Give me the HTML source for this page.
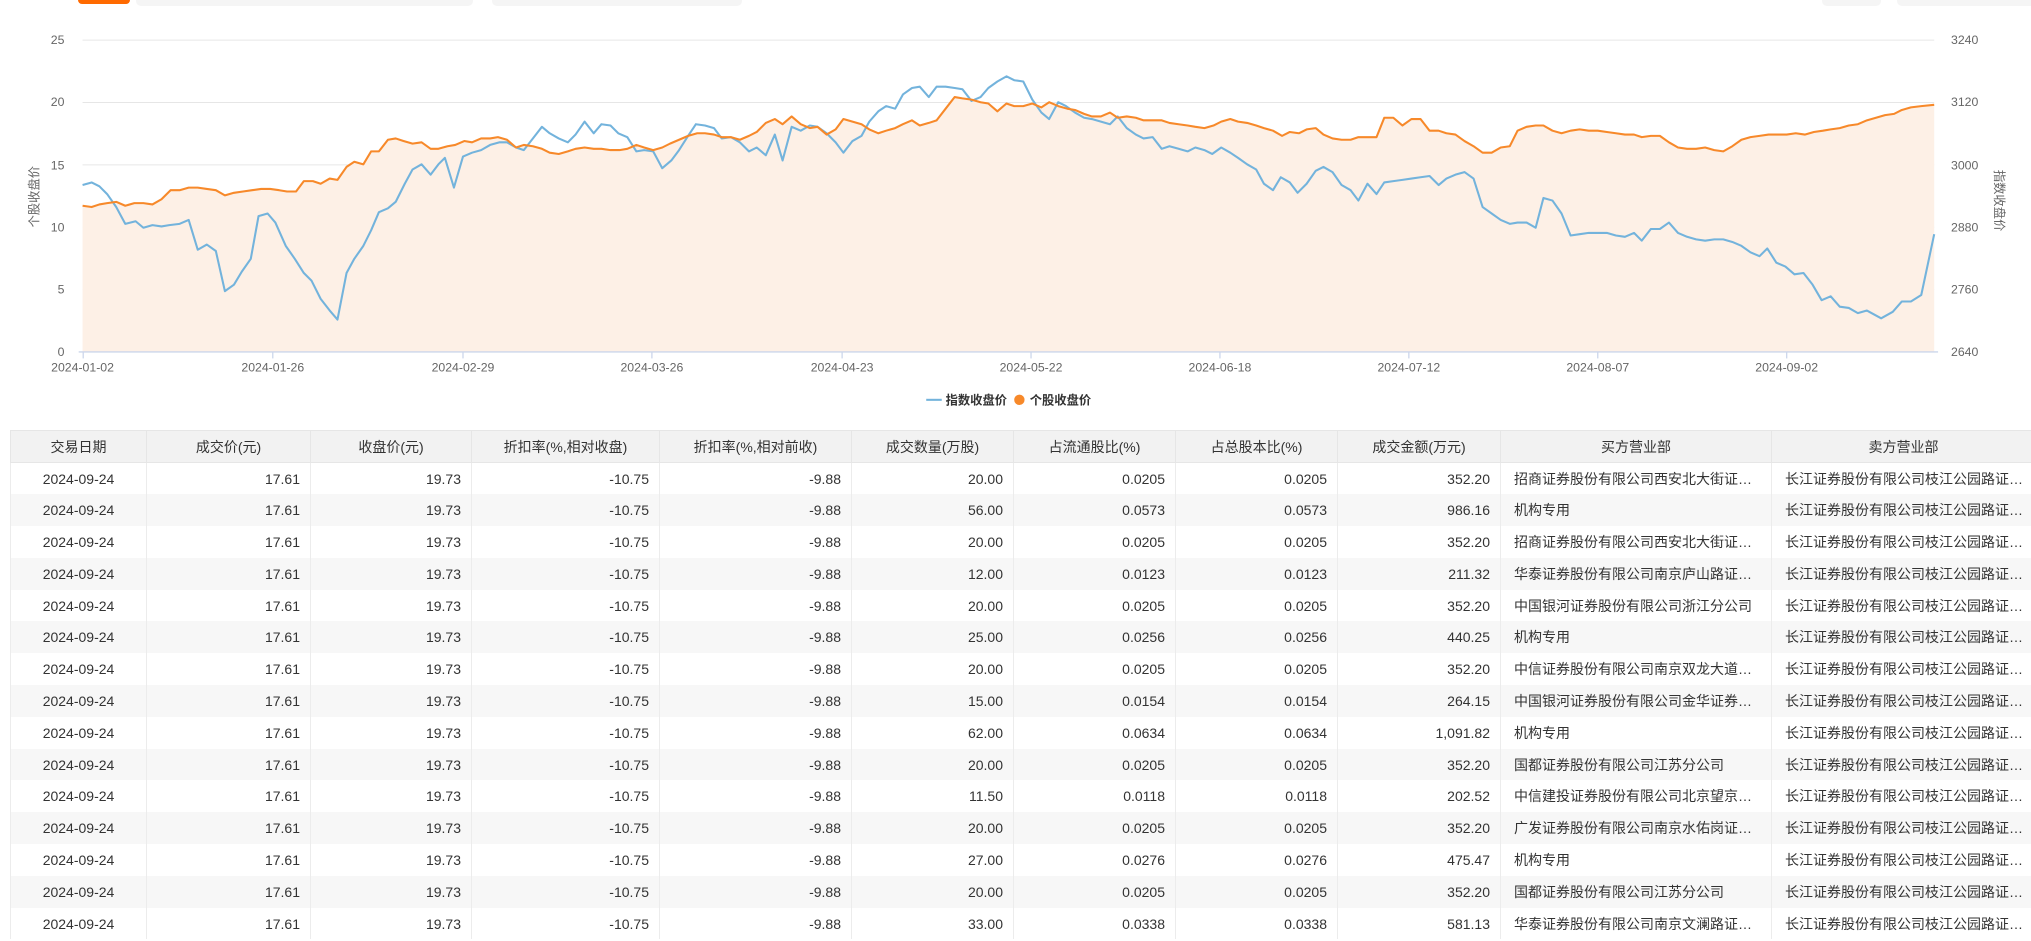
<!DOCTYPE html>
<html><head><meta charset="utf-8">
<style>
*{margin:0;padding:0;box-sizing:border-box}
html,body{width:2031px;height:941px;overflow:hidden;background:#fff;font-family:"Liberation Sans","Noto Sans CJK SC",sans-serif;color:#333}
.tab{position:absolute;top:0;height:6px;background:#f5f5f5;border-radius:0 0 5px 5px}
svg text{font-family:"Liberation Sans","Noto Sans CJK SC",sans-serif}
table{position:absolute;left:10px;top:430px;border-collapse:collapse;table-layout:fixed;width:2025px;font-size:14px}
th{background:#f2f2f2;font-weight:normal;height:32px;border:1px solid #e6e6e6;text-align:center;color:#333;white-space:nowrap}
td{height:31.8px;border-left:1px solid #ececec;border-right:1px solid #ececec;padding:0 10px;white-space:nowrap;overflow:hidden;text-overflow:ellipsis;text-align:right}
td.c{text-align:center}
td.l{text-align:left;padding-left:13px}
tr:nth-child(odd) td{background:#f7f7f7}
</style></head><body>
<div class="tab" style="left:78px;width:52px;height:4px;background:#ff6a00;border-radius:0 0 4px 4px;z-index:2"></div>
<div class="tab" style="left:136px;width:337px"></div>
<div class="tab" style="left:492px;width:250px"></div>
<div class="tab" style="left:1822px;width:59px"></div>
<div class="tab" style="left:1897px;width:140px"></div>

<svg width="2031" height="427" viewBox="0 0 1568 330" style="position:absolute;left:0;top:0">
<g stroke="#e6e6e6" stroke-width="0.8">
<line x1="63" x2="1494" y1="31" y2="31"/><line x1="63" x2="1494" y1="79.2" y2="79.2"/><line x1="63" x2="1494" y1="127.4" y2="127.4"/><line x1="63" x2="1494" y1="175.6" y2="175.6"/><line x1="63" x2="1494" y1="223.8" y2="223.8"/>
</g>
<polygon fill="#fdf0e6" points="63,159 70,160 76,158 82,157 89,156 96,159 103,157 110,157 117,158 124,154 131,147 138,147 145,145 152,145 159,146 166,147 173,151 180,149 187,148 194,147 201,146 208,146 215,147 221,148 228,148 234,140 241,140 247,142 254,138 260,139 267,129 273,125 280,127 286,117 292,117 299,108 305,107 311,109 318,111 325,110 332,115 338,115 345,113 351,112 358,109 364,110 371,107 378,107 384,106 391,108 398,114 404,112 411,113 418,115 424,118 431,119 438,117 444,115 451,114 458,115 464,115 471,116 478,116 484,115 491,112 497,114 504,116 511,114 517,111 524,108 531,105 538,103 544,103 551,104 557,106 564,106 571,108 578,105 584,102 591,95 598,92 604,96 611,90 618,96 625,99 631,98 638,104 645,100 651,92 658,94 665,96 671,100 678,103 684,101 691,99 697,96 704,93 710,97 717,95 723,93 730,84 737,75 743,76 750,77 757,79 763,80 770,86 777,80 783,82 790,82 797,80 804,83 810,79 817,82 824,84 830,85 837,88 843,90 850,90 857,87 863,91 870,90 877,91 883,93 890,93 897,93 903,95 910,96 917,97 923,98 930,99 937,97 943,94 950,92 956,94 963,95 970,97 976,99 983,101 990,105 996,102 1003,103 1009,100 1016,99 1022,104 1029,107 1036,108 1043,108 1049,106 1056,106 1063,106 1069,91 1076,91 1083,97 1090,92 1097,92 1104,101 1111,101 1117,103 1124,104 1131,109 1138,113 1145,118 1152,118 1159,114 1166,113 1172,101 1179,98 1186,97 1192,97 1199,101 1206,103 1213,101 1220,100 1227,101 1234,101 1241,102 1248,103 1255,104 1262,104 1268,106 1275,105 1282,105 1289,110 1296,114 1303,115 1310,115 1317,114 1324,116 1331,117 1338,113 1345,108 1352,106 1359,105 1366,104 1373,104 1380,104 1387,103 1394,104 1401,102 1408,101 1414,100 1421,99 1428,97 1435,96 1442,93 1449,91 1456,89 1463,88 1469,85 1476,83 1484,82 1494,81 1494,272 63,272"/>
<polyline fill="none" stroke="#73b3dc" stroke-width="1.6" stroke-linejoin="round" points="63,143 70,141 76,144 82,150 89,160 96,173 104,171 110,176 117,174 124,175 130,174 138,173 145,170 152,193 159,189 166,194 173,225 180,220 186,210 193,200 199,167 206,165 212,172 220,190 227,200 234,211 240,217 247,231 254,240 260,247 267,211 273,200 280,190 286,178 292,164 299,161 305,156 312,142 318,131 325,127 332,135 338,127 343,122 350,145 357,121 364,118 371,116 378,112 385,110 391,110 398,114 404,116 411,107 418,98 424,103 431,107 438,110 444,104 451,94 458,103 464,96 471,97 477,103 484,106 491,117 497,116 504,117 511,130 518,124 524,116 531,105 537,96 544,97 551,99 557,107 564,106 571,110 578,117 584,114 591,120 598,104 604,124 611,98 618,101 625,97 631,98 638,103 645,110 651,118 658,109 665,105 671,94 678,86 684,82 691,84 697,73 704,68 710,67 717,75 723,67 730,67 737,68 743,69 750,78 757,75 763,68 770,63 777,59 783,62 790,63 797,77 804,87 810,92 817,79 823,82 830,87 837,91 843,92 850,94 857,96 863,90 870,99 877,104 883,107 890,106 897,115 903,113 910,115 917,117 923,114 930,116 936,119 943,114 950,118 956,122 963,127 970,131 976,142 983,147 989,137 996,141 1002,149 1009,142 1016,132 1022,129 1029,133 1036,143 1043,147 1049,155 1056,142 1063,150 1069,141 1076,140 1083,139 1090,138 1097,137 1104,136 1111,143 1117,138 1124,135 1131,133 1138,138 1145,160 1152,165 1159,170 1166,173 1172,172 1179,172 1186,176 1192,153 1199,155 1206,165 1213,182 1220,181 1227,180 1234,180 1241,180 1248,182 1255,183 1262,180 1268,186 1275,177 1282,177 1289,172 1296,180 1303,183 1310,185 1317,186 1324,185 1331,185 1338,187 1345,190 1352,195 1359,198 1365,192 1372,203 1379,206 1386,212 1393,211 1400,220 1407,232 1414,229 1421,237 1428,238 1435,242 1442,240 1453,246 1462,241 1469,233 1476,233 1484,228 1494,181"/>
<polyline fill="none" stroke="#f7892a" stroke-width="1.6" stroke-linejoin="round" points="63,159 70,160 76,158 82,157 89,156 96,159 103,157 110,157 117,158 124,154 131,147 138,147 145,145 152,145 159,146 166,147 173,151 180,149 187,148 194,147 201,146 208,146 215,147 221,148 228,148 234,140 241,140 247,142 254,138 260,139 267,129 273,125 280,127 286,117 292,117 299,108 305,107 311,109 318,111 325,110 332,115 338,115 345,113 351,112 358,109 364,110 371,107 378,107 384,106 391,108 398,114 404,112 411,113 418,115 424,118 431,119 438,117 444,115 451,114 458,115 464,115 471,116 478,116 484,115 491,112 497,114 504,116 511,114 517,111 524,108 531,105 538,103 544,103 551,104 557,106 564,106 571,108 578,105 584,102 591,95 598,92 604,96 611,90 618,96 625,99 631,98 638,104 645,100 651,92 658,94 665,96 671,100 678,103 684,101 691,99 697,96 704,93 710,97 717,95 723,93 730,84 737,75 743,76 750,77 757,79 763,80 770,86 777,80 783,82 790,82 797,80 804,83 810,79 817,82 824,84 830,85 837,88 843,90 850,90 857,87 863,91 870,90 877,91 883,93 890,93 897,93 903,95 910,96 917,97 923,98 930,99 937,97 943,94 950,92 956,94 963,95 970,97 976,99 983,101 990,105 996,102 1003,103 1009,100 1016,99 1022,104 1029,107 1036,108 1043,108 1049,106 1056,106 1063,106 1069,91 1076,91 1083,97 1090,92 1097,92 1104,101 1111,101 1117,103 1124,104 1131,109 1138,113 1145,118 1152,118 1159,114 1166,113 1172,101 1179,98 1186,97 1192,97 1199,101 1206,103 1213,101 1220,100 1227,101 1234,101 1241,102 1248,103 1255,104 1262,104 1268,106 1275,105 1282,105 1289,110 1296,114 1303,115 1310,115 1317,114 1324,116 1331,117 1338,113 1345,108 1352,106 1359,105 1366,104 1373,104 1380,104 1387,103 1394,104 1401,102 1408,101 1414,100 1421,99 1428,97 1435,96 1442,93 1449,91 1456,89 1463,88 1469,85 1476,83 1484,82 1494,81"/>
<line x1="60" x2="1497" y1="272" y2="272" stroke="#ccd6eb" stroke-width="1"/>
<g stroke="#ccd6eb"><line x1="63.5" x2="63.5" y1="272" y2="277"/><line x1="210" x2="210" y1="272" y2="277"/><line x1="357" x2="357" y1="272" y2="277"/><line x1="503" x2="503" y1="272" y2="277"/><line x1="650" x2="650" y1="272" y2="277"/><line x1="796" x2="796" y1="272" y2="277"/><line x1="942" x2="942" y1="272" y2="277"/><line x1="1088" x2="1088" y1="272" y2="277"/><line x1="1234" x2="1234" y1="272" y2="277"/><line x1="1380" x2="1380" y1="272" y2="277"/></g>
<g font-size="9.5" fill="#666" text-anchor="end">
<text x="49" y="34">25</text><text x="49" y="82">20</text><text x="49" y="131">15</text><text x="49" y="179">10</text><text x="49" y="227">5</text><text x="49" y="275">0</text>
</g>
<g font-size="9.5" fill="#666">
<text x="1507" y="34">3240</text><text x="1507" y="82">3120</text><text x="1507" y="131">3000</text><text x="1507" y="179">2880</text><text x="1507" y="227">2760</text><text x="1507" y="275">2640</text>
</g>
<g font-size="9.5" fill="#666" text-anchor="middle">
<text x="63" y="287">2024-01-02</text><text x="210" y="287">2024-01-26</text><text x="357" y="287">2024-02-29</text><text x="503" y="287">2024-03-26</text><text x="650" y="287">2024-04-23</text><text x="796" y="287">2024-05-22</text><text x="942" y="287">2024-06-18</text><text x="1088" y="287">2024-07-12</text><text x="1234" y="287">2024-08-07</text><text x="1380" y="287">2024-09-02</text>
</g>
<text font-size="9.5" fill="#666" text-anchor="middle" transform="translate(29,152) rotate(-90)">个股收盘价</text>
<text font-size="9.5" fill="#666" text-anchor="middle" transform="translate(1541,155) rotate(90)">指数收盘价</text>
<line x1="715" x2="727" y1="309" y2="309" stroke="#73b3dc" stroke-width="1.6"/>
<text x="730" y="312.5" font-size="9.5" font-weight="bold" fill="#333">指数收盘价</text>
<circle cx="787" cy="309" r="4" fill="#f7892a"/>
<text x="795" y="312.5" font-size="9.5" font-weight="bold" fill="#333">个股收盘价</text>
</svg>

<table>
<colgroup><col style="width:136px"><col style="width:164px"><col style="width:161px"><col style="width:188px"><col style="width:192px"><col style="width:162px"><col style="width:162px"><col style="width:162px"><col style="width:163px"><col style="width:271px"><col style="width:264px"></colgroup>
<tr><th>交易日期</th><th>成交价(元)</th><th>收盘价(元)</th><th>折扣率(%,相对收盘)</th><th>折扣率(%,相对前收)</th><th>成交数量(万股)</th><th>占流通股比(%)</th><th>占总股本比(%)</th><th>成交金额(万元)</th><th>买方营业部</th><th>卖方营业部</th></tr>
<tr><td class="c">2024-09-24</td><td>17.61</td><td>19.73</td><td>-10.75</td><td>-9.88</td><td>20.00</td><td>0.0205</td><td>0.0205</td><td>352.20</td><td class="l">招商证券股份有限公司西安北大街证…</td><td class="l">长江证券股份有限公司枝江公园路证…</td></tr>
<tr><td class="c">2024-09-24</td><td>17.61</td><td>19.73</td><td>-10.75</td><td>-9.88</td><td>56.00</td><td>0.0573</td><td>0.0573</td><td>986.16</td><td class="l">机构专用</td><td class="l">长江证券股份有限公司枝江公园路证…</td></tr>
<tr><td class="c">2024-09-24</td><td>17.61</td><td>19.73</td><td>-10.75</td><td>-9.88</td><td>20.00</td><td>0.0205</td><td>0.0205</td><td>352.20</td><td class="l">招商证券股份有限公司西安北大街证…</td><td class="l">长江证券股份有限公司枝江公园路证…</td></tr>
<tr><td class="c">2024-09-24</td><td>17.61</td><td>19.73</td><td>-10.75</td><td>-9.88</td><td>12.00</td><td>0.0123</td><td>0.0123</td><td>211.32</td><td class="l">华泰证券股份有限公司南京庐山路证…</td><td class="l">长江证券股份有限公司枝江公园路证…</td></tr>
<tr><td class="c">2024-09-24</td><td>17.61</td><td>19.73</td><td>-10.75</td><td>-9.88</td><td>20.00</td><td>0.0205</td><td>0.0205</td><td>352.20</td><td class="l">中国银河证券股份有限公司浙江分公司</td><td class="l">长江证券股份有限公司枝江公园路证…</td></tr>
<tr><td class="c">2024-09-24</td><td>17.61</td><td>19.73</td><td>-10.75</td><td>-9.88</td><td>25.00</td><td>0.0256</td><td>0.0256</td><td>440.25</td><td class="l">机构专用</td><td class="l">长江证券股份有限公司枝江公园路证…</td></tr>
<tr><td class="c">2024-09-24</td><td>17.61</td><td>19.73</td><td>-10.75</td><td>-9.88</td><td>20.00</td><td>0.0205</td><td>0.0205</td><td>352.20</td><td class="l">中信证券股份有限公司南京双龙大道…</td><td class="l">长江证券股份有限公司枝江公园路证…</td></tr>
<tr><td class="c">2024-09-24</td><td>17.61</td><td>19.73</td><td>-10.75</td><td>-9.88</td><td>15.00</td><td>0.0154</td><td>0.0154</td><td>264.15</td><td class="l">中国银河证券股份有限公司金华证券…</td><td class="l">长江证券股份有限公司枝江公园路证…</td></tr>
<tr><td class="c">2024-09-24</td><td>17.61</td><td>19.73</td><td>-10.75</td><td>-9.88</td><td>62.00</td><td>0.0634</td><td>0.0634</td><td>1,091.82</td><td class="l">机构专用</td><td class="l">长江证券股份有限公司枝江公园路证…</td></tr>
<tr><td class="c">2024-09-24</td><td>17.61</td><td>19.73</td><td>-10.75</td><td>-9.88</td><td>20.00</td><td>0.0205</td><td>0.0205</td><td>352.20</td><td class="l">国都证券股份有限公司江苏分公司</td><td class="l">长江证券股份有限公司枝江公园路证…</td></tr>
<tr><td class="c">2024-09-24</td><td>17.61</td><td>19.73</td><td>-10.75</td><td>-9.88</td><td>11.50</td><td>0.0118</td><td>0.0118</td><td>202.52</td><td class="l">中信建投证券股份有限公司北京望京…</td><td class="l">长江证券股份有限公司枝江公园路证…</td></tr>
<tr><td class="c">2024-09-24</td><td>17.61</td><td>19.73</td><td>-10.75</td><td>-9.88</td><td>20.00</td><td>0.0205</td><td>0.0205</td><td>352.20</td><td class="l">广发证券股份有限公司南京水佑岗证…</td><td class="l">长江证券股份有限公司枝江公园路证…</td></tr>
<tr><td class="c">2024-09-24</td><td>17.61</td><td>19.73</td><td>-10.75</td><td>-9.88</td><td>27.00</td><td>0.0276</td><td>0.0276</td><td>475.47</td><td class="l">机构专用</td><td class="l">长江证券股份有限公司枝江公园路证…</td></tr>
<tr><td class="c">2024-09-24</td><td>17.61</td><td>19.73</td><td>-10.75</td><td>-9.88</td><td>20.00</td><td>0.0205</td><td>0.0205</td><td>352.20</td><td class="l">国都证券股份有限公司江苏分公司</td><td class="l">长江证券股份有限公司枝江公园路证…</td></tr>
<tr><td class="c">2024-09-24</td><td>17.61</td><td>19.73</td><td>-10.75</td><td>-9.88</td><td>33.00</td><td>0.0338</td><td>0.0338</td><td>581.13</td><td class="l">华泰证券股份有限公司南京文澜路证…</td><td class="l">长江证券股份有限公司枝江公园路证…</td></tr>
</table>
</body></html>
